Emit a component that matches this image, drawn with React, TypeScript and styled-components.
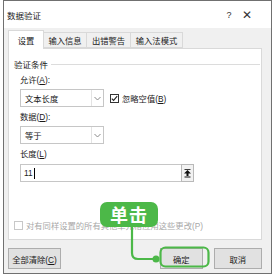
import React from "react";
import styled, { createGlobalStyle } from "styled-components";

const Global = createGlobalStyle`
  html, body { margin: 0; padding: 0; background: #ffffff; }
  body { font-family: "Liberation Sans", "Noto Sans CJK SC", sans-serif; font-size: 8.3px; color: #1a1a1a; }
  * { box-sizing: border-box; }
`;

const Stage = styled.div`
  position: relative;
  width: 275px;
  height: 275px;
  overflow: hidden;
`;

const Window = styled.div`
  margin-left: 3px;
  width: 269px;
  height: 274px;
  border: 1px solid #707070;
  background: #f0f0f0;
  display: flex;
  flex-direction: column;
`;

const TitleBar = styled.div`
  height: 27px;
  background: #ffffff;
  display: flex;
  align-items: center;
  padding: 0 10px 0 3px;
  font-size: 8.5px;
`;

const Title = styled.div`
  flex: 1;
`;

const TitleBtn = styled.div<{ $w: number }>`
  width: ${(p) => p.$w}px;
  text-align: center;
  color: #333;
  font-size: ${(p) => (p.$w > 10 ? 12 : 9)}px;
`;

const Body = styled.div`
  flex: 1;
  padding: 0 9px 0 4px;
  display: flex;
  flex-direction: column;
`;

const TabRow = styled.div`
  display: flex;
  align-items: flex-end;
  height: 19px;
  margin-top: 1px;
`;

const Tab = styled.div<{ $active?: boolean; $w: number }>`
  width: ${(p) => p.$w}px;
  height: ${(p) => (p.$active ? 19 : 16)}px;
  display: flex;
  align-items: center;
  justify-content: center;
  background: ${(p) => (p.$active ? "#ffffff" : "#f0f0f0")};
  border: 1px solid #d9d9d9;
  border-bottom: ${(p) => (p.$active ? "none" : "1px solid #d9d9d9")};
  margin-left: ${(p) => (p.$active ? 0 : -1)}px;
  position: relative;
  z-index: ${(p) => (p.$active ? 1 : 0)};
  margin-bottom: ${(p) => (p.$active ? -1 : 0)}px;
`;

const Panel = styled.div`
  height: 192px;
  background: #ffffff;
  border: 1px solid #d9d9d9;
  padding: 9px 0 0 5px;
  display: flex;
  flex-direction: column;
`;

const Legend = styled.div`
  display: flex;
  align-items: center;
  gap: 3px;
  height: 12px;
  padding-right: 1px;
  font-size: 8.5px;
  &::after {
    content: "";
    flex: 1;
    height: 1px;
    background: #dcdcdc;
  }
`;

const Group = styled.div`
  padding-left: 6px;
  display: flex;
  flex-direction: column;
`;

const Label = styled.div<{ $top: number }>`
  margin-top: ${(p) => p.$top}px;
  height: 11px;
  line-height: 11px;
  u { text-decoration: underline; }
`;

const Row = styled.div`
  display: flex;
  align-items: center;
  margin-top: 3px;
`;

const Select = styled.div`
  width: 84px;
  height: 18px;
  border: 1px solid #c6c6c6;
  background: #fff;
  display: flex;
  align-items: center;
  padding-left: 4px;
`;

const SelectText = styled.div`
  flex: 1;
`;

const Arrow = styled.div`
  width: 12px;
  height: 16px;
  border-left: 1px solid #e3e3e3;
  display: flex;
  align-items: center;
  justify-content: center;
`;

const Check = styled.div<{ $dim?: boolean }>`
  width: 9px;
  height: 9px;
  border: 1px solid ${(p) => (p.$dim ? "#c8c8c8" : "#333")};
  background: #fff;
  display: flex;
  align-items: center;
  justify-content: center;
`;

const CheckLabel = styled.label<{ $dim?: boolean; $ml?: number }>`
  display: flex;
  align-items: center;
  gap: 3px;
  margin-left: ${(p) => p.$ml ?? 6}px;
  color: ${(p) => (p.$dim ? "#a8a8a8" : "#1a1a1a")};
  u { text-decoration: underline; }
`;

const InputRow = styled.div`
  display: flex;
  margin-top: 4px;
`;

const Input = styled.div`
  width: 161px;
  height: 18px;
  border: 1px solid #c6c6c6;
  border-right: none;
  background: #fff;
  display: flex;
  align-items: center;
  padding-left: 3px;
`;

const Caret = styled.span`
  display: inline-block;
  width: 1px;
  height: 11px;
  background: #000;
  margin-left: 1px;
`;

const RefBtn = styled.div`
  width: 13px;
  height: 18px;
  border: 1px solid #b9b9b9;
  background: #f2f2f2;
  display: flex;
  align-items: center;
  justify-content: center;
`;

const ApplyRow = styled.div`
  margin-top: auto;
  margin-bottom: 8px;
`;

const Buttons = styled.div`
  display: flex;
  align-items: center;
  margin-top: 8px;
`;

const Btn = styled.div<{ $w: number; $ml?: number }>`
  width: ${(p) => p.$w}px;
  height: 21px;
  margin-left: ${(p) => p.$ml ?? 0}px;
  background: #e1e1e1;
  border: 1px solid #adadad;
  display: flex;
  align-items: center;
  justify-content: center;
  u { text-decoration: underline; }
`;

const Bubble = styled.div`
  position: absolute;
  left: 100px;
  top: 202px;
  width: 58px;
  height: 25px;
  border-radius: 7px;
  background: #4cb848;
  color: #fff;
  font-family: "Noto Sans CJK SC", sans-serif;
  font-weight: 700;
  font-size: 18px;
  line-height: 25px;
  text-align: center;
  letter-spacing: 1px;
`;

const Overlay = styled.svg`
  position: absolute;
  left: 0;
  top: 0;
  pointer-events: none;
`;

const Chevron = () => (
  <svg width="7" height="5" viewBox="0 0 7 5">
    <path d="M0.5 1 L3.5 4 L6.5 1" fill="none" stroke="#8a8a8a" strokeWidth="1" />
  </svg>
);

export default function App() {
  return (
    <Stage>
      <Global />
      <Window>
        <TitleBar>
          <Title>数据验证</Title>
          <TitleBtn $w={8}>?</TitleBtn>
          <TitleBtn $w={28}>✕</TitleBtn>
        </TitleBar>
        <Body>
          <TabRow>
            <Tab $active $w={36}>设置</Tab>
            <Tab $w={44}>输入信息</Tab>
            <Tab $w={45}>出错警告</Tab>
            <Tab $w={53}>输入法模式</Tab>
          </TabRow>
          <Panel>
            <Legend>验证条件</Legend>
            <Group>
              <Label $top={5}>允许(<u>A</u>):</Label>
              <Row>
                <Select>
                  <SelectText>文本长度</SelectText>
                  <Arrow><Chevron /></Arrow>
                </Select>
                <CheckLabel>
                  <Check>
                    <svg width="7" height="7" viewBox="0 0 7 7">
                      <path d="M0.8 3.6 L2.6 5.4 L6.2 1.2" fill="none" stroke="#222" strokeWidth="1.1" />
                    </svg>
                  </Check>
                  <span>忽略空值(<u>B</u>)</span>
                </CheckLabel>
              </Row>
              <Label $top={5}>数据(<u>D</u>):</Label>
              <Row>
                <Select>
                  <SelectText>等于</SelectText>
                  <Arrow><Chevron /></Arrow>
                </Select>
              </Row>
              <Label $top={5}>长度(<u>L</u>)</Label>
              <InputRow>
                <Input>
                  11<Caret />
                </Input>
                <RefBtn>
                  <svg width="9" height="9" viewBox="0 0 9 9">
                    <path d="M4.5 1 L8 4.5 L5.5 4.5 L5.5 7 L3.5 7 L3.5 4.5 L1 4.5 Z" fill="#111" />
                    <rect x="1.5" y="7.5" width="6" height="1" fill="#111" />
                    <rect x="1.5" y="0" width="6" height="0.8" fill="#111" />
                  </svg>
                </RefBtn>
              </InputRow>
            </Group>
            <ApplyRow>
              <CheckLabel $dim $ml={0}>
                <Check $dim />
                <span>对有同样设置的所有其他单元格应用这些更改(P)</span>
              </CheckLabel>
            </ApplyRow>
          </Panel>
          <Buttons>
            <Btn $w={56}><span>全部清除(<u>C</u>)</span></Btn>
            <Btn $w={45} $ml={99}>确定</Btn>
            <Btn $w={51} $ml={11}>取消</Btn>
          </Buttons>
        </Body>
      </Window>
      <Overlay width="275" height="275" viewBox="0 0 275 275">
        <path d="M132 226 L132 253 Q132 259 138 259 L156 259" fill="none" stroke="#4cb848" strokeWidth="2.2" />
        <circle cx="156" cy="259" r="3.5" fill="#4cb848" />
        <rect x="160.5" y="247.5" width="48" height="19" rx="5" fill="none" stroke="#4cb848" strokeWidth="2.2" />
      </Overlay>
      <Bubble>单击</Bubble>
    </Stage>
  );
}
